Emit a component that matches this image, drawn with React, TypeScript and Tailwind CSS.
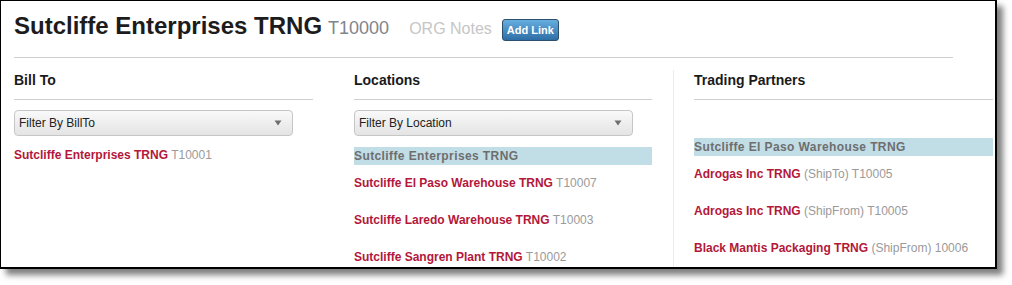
import React from "react";

const Arrow = () => (
  <svg width="8" height="6" viewBox="0 0 8 6" className="shrink-0">
    <path d="M0.5 0.5 L7.5 0.5 L4 5.5 Z" fill="#6f6f6f" />
  </svg>
);

const Select = ({ label }: { label: string }) => (
  <div className="mt-[10px] h-[26px] w-[279px] rounded-[4px] border border-[#c6c6c6] bg-gradient-to-b from-[#f9f9f9] to-[#e4e4e4] flex items-center justify-between pl-[4px] pr-[10px] text-[12px] text-[#222]">
    <span>{label}</span>
    <Arrow />
  </div>
);

const Heading = ({ children }: { children: React.ReactNode }) => (
  <div className="text-[14px] font-bold leading-[20px] text-[#1a1a1a] pb-[9px] border-b border-[#cfcfcf]">
    {children}
  </div>
);

const Item = ({ name, extra }: { name: string; extra: string }) => (
  <div className="py-[10px] leading-[17px] text-[12px] whitespace-nowrap">
    <span className="font-bold text-[#b3173a]">{name}</span>
    <span className="text-[#9a9a9a]"> {extra}</span>
  </div>
);

const Band = ({ children, className }: { children: React.ReactNode; className: string }) => (
  <div className={`h-[18px] leading-[18px] bg-[#c1dde6] text-[12px] font-bold tracking-[0.4px] text-[#6e6e6e] whitespace-nowrap ${className}`}>
    {children}
  </div>
);

export default function App() {
  return (
    <div className="w-[1012px] h-[285px] bg-white font-['Liberation_Sans',Arial,sans-serif]">
      <div className="w-[997px] h-[269px] border-l border-t border-r-2 border-b-2 border-black bg-white overflow-hidden shadow-[6px_6px_6px_rgba(0,0,0,0.5)]">
        <div className="pl-[13px] pt-[15px] flex items-center h-[39px]">
          <div className="flex items-baseline">
            <span className="text-[24px] leading-[24px] font-bold text-[#1c1c1c]">Sutcliffe Enterprises TRNG</span>
            <span className="ml-[6px] text-[18px] text-[#7f858a]">T10000</span>
            <span className="ml-[20px] text-[16px] text-[#c6c6c6]">ORG Notes</span>
          </div>
          <button className="ml-[10px] mt-[3px] h-[22px] px-[4px] rounded-[3px] border border-[#2d4f6c] bg-gradient-to-b from-[#66aee0] to-[#2e6ea6] text-white text-[11px] font-bold leading-[20px]">
            Add Link
          </button>
        </div>
        <div className="ml-[13px] mt-[17px] w-[939px] border-t border-[#cfcfcf]" />
        <div className="mt-[12px] pl-[13px] flex h-[200px]">
          <div className="w-[340px] shrink-0">
            <div className="w-[299px]">
              <Heading>Bill To</Heading>
              <Select label="Filter By BillTo" />
              <div className="mt-[1px]">
                <Item name="Sutcliffe Enterprises TRNG" extra="T10001" />
              </div>
            </div>
          </div>
          <div className="w-[319px] shrink-0">
            <div className="w-[298px]">
              <Heading>Locations</Heading>
              <Select label="Filter By Location" />
              <Band className="mt-[11px]">Sutcliffe Enterprises TRNG</Band>
              <Item name="Sutcliffe El Paso Warehouse TRNG" extra="T10007" />
              <Item name="Sutcliffe Laredo Warehouse TRNG" extra="T10003" />
              <Item name="Sutcliffe Sangren Plant TRNG" extra="T10002" />
            </div>
          </div>
          <div className="flex-1 border-l border-[#ececec] pl-[20px] pr-[2px]">
            <Heading>Trading Partners</Heading>
            <Band className="mt-[38px]">Sutcliffe El Paso Warehouse TRNG</Band>
            <div>
              <Item name="Adrogas Inc TRNG" extra="(ShipTo) T10005" />
              <Item name="Adrogas Inc TRNG" extra="(ShipFrom) T10005" />
              <Item name="Black Mantis Packaging TRNG" extra="(ShipFrom) 10006" />
            </div>
          </div>
        </div>
      </div>
    </div>
  );
}
